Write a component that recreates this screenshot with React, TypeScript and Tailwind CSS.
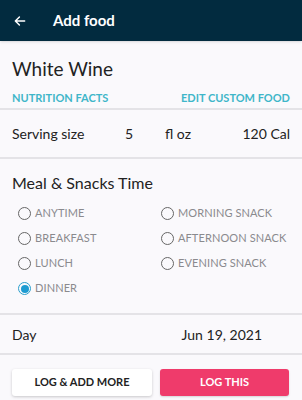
import React from 'react';

const meals = [
  ['ANYTIME', 'MORNING SNACK'],
  ['BREAKFAST', 'AFTERNOON SNACK'],
  ['LUNCH', 'EVENING SNACK'],
  ['DINNER', ''],
];

const Radio = ({ label, checked }: { label: string; checked?: boolean }) => (
  <div className="flex items-center gap-[4px] h-[25px]">
    <span
      className={`w-[13px] h-[13px] rounded-full border flex items-center justify-center ${
        checked ? 'border-[#2a9fcc]' : 'border-[#666]'
      }`}
    >
      {checked && <span className="w-[8px] h-[8px] rounded-full bg-[#1d9bd1]" />}
    </span>
    <span className="text-[11px] text-[#8a8a8e] tracking-[0.1px]">{label}</span>
  </div>
);

export default function App() {
  return (
    <div className="w-[302px] h-[400px] bg-[#faf9fc] text-[#222] overflow-hidden" style={{ fontFamily: 'Lato, "Open Sans", sans-serif' }}>
      {/* Header */}
      <div className="h-[41px] bg-[#022b3f] flex items-center text-white shadow-sm">
        <svg width="14" height="14" viewBox="0 0 24 24" className="ml-[13px]" fill="none" stroke="white" strokeWidth="2.5" strokeLinecap="round" strokeLinejoin="round">
          <path d="M20 12H4M11 5l-7 7 7 7" />
        </svg>
        <span className="ml-[26px] text-[15px] font-bold">Add food</span>
      </div>

      {/* Title */}
      <div className="px-[12px] pt-[15px]">
        <h1 className="text-[19px] leading-[26px]">White Wine</h1>
        <div className="flex justify-between mt-[9px] text-[11px] font-bold text-[#3fb6c9] leading-[14px]">
          <span>NUTRITION FACTS</span>
          <span>EDIT CUSTOM FOOD</span>
        </div>
      </div>
      <div className="mt-[3px] h-[2px] bg-[#e4e3e7]" />

      {/* Serving size */}
      <div className="h-[47px] flex items-center px-[12px] text-[14px]">
        <span className="w-[113px]">Serving size</span>
        <span className="w-[40px]">5</span>
        <span>fl oz</span>
        <span className="ml-auto">120 Cal</span>
      </div>
      <div className="h-[2px] bg-[#e4e3e7]" />

      {/* Meals */}
      <div className="px-[12px] pt-[14px]">
        <h2 className="text-[16px] leading-[20px]">Meal &amp; Snacks Time</h2>
        <div className="mt-[8px] pl-[6px] grid grid-cols-[143px_1fr]">
          {meals.map(([a, b]) => (
            <React.Fragment key={a}>
              <Radio label={a} checked={a === 'DINNER'} />
              {b ? <Radio label={b} /> : <div />}
            </React.Fragment>
          ))}
        </div>
      </div>
      <div className="mt-[12px] h-[2px] bg-[#e4e3e7]" />

      {/* Day */}
      <div className="h-[38px] flex items-center px-[12px] text-[14px]">
        <span>Day</span>
        <span className="ml-auto mr-[28px]">Jun 19, 2021</span>
      </div>
      <div className="h-[2px] bg-[#e4e3e7]" />

      {/* Buttons */}
      <div className="flex gap-[8px] px-[12px] pt-[14px]">
        <button className="w-[140px] h-[27px] bg-white rounded-[3px] shadow-[0_1px_3px_rgba(0,0,0,0.2)] text-[11px] font-bold text-[#222]">
          LOG &amp; ADD MORE
        </button>
        <button className="w-[129px] h-[27px] bg-[#ef3b6b] rounded-[3px] shadow-[0_1px_2px_rgba(0,0,0,0.15)] text-[11px] font-bold text-white">
          LOG THIS
        </button>
      </div>
    </div>
  );
}
